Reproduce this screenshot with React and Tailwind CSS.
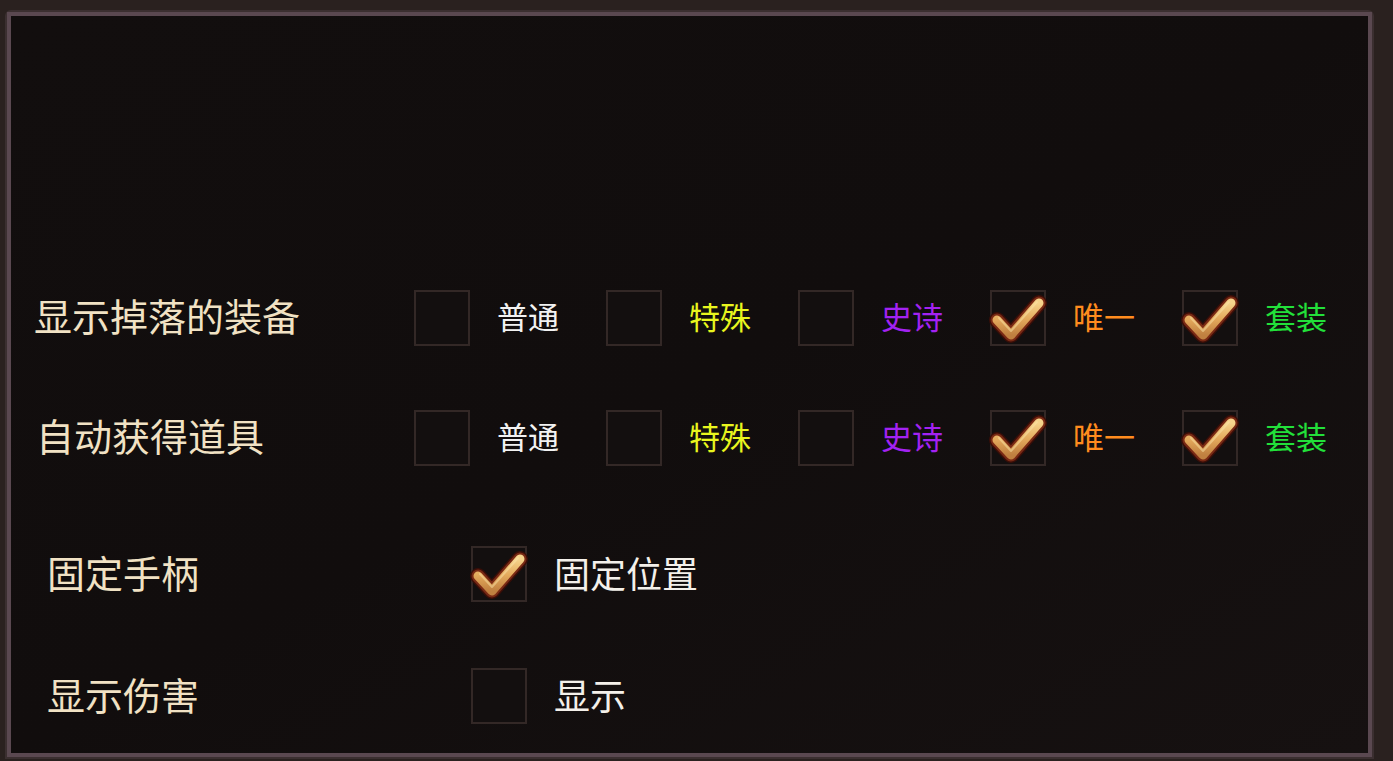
const cjk = { fontFamily: '"Noto Sans CJK SC", "Noto Sans", sans-serif' };

function CheckBox({ checked }) {
  return (
    <div className="relative w-14 h-14 shrink-0 border-2 border-[#332826] bg-[#130f0f]">
      {checked && (
        <svg viewBox="0 0 56 56" className="absolute -inset-[2px] w-14 h-14 overflow-visible">
          <defs>
            <linearGradient id="gold" x1="0" y1="0" x2="0" y2="1">
              <stop offset="0" stopColor="#f6d48c" />
              <stop offset="0.5" stopColor="#e4aa5c" />
              <stop offset="1" stopColor="#c08040" />
            </linearGradient>
          </defs>
          <path d="M7 30 L21 45 L49 13" fill="none" stroke="#3a0e08" strokeWidth="16" strokeLinecap="round" strokeLinejoin="round" />
          <path d="M7 30 L21 45 L49 13" fill="none" stroke="#7a2a14" strokeWidth="13" strokeLinecap="round" strokeLinejoin="round" />
          <path d="M7 30 L21 45 L49 13" fill="none" stroke="url(#gold)" strokeWidth="9" strokeLinecap="round" strokeLinejoin="round" />
          <path d="M9 28 L21 41 L47 12" fill="none" stroke="#fbe3a8" strokeWidth="2" strokeLinecap="round" strokeLinejoin="round" opacity="0.5" />
        </svg>
      )}
    </div>
  );
}

const rarities = [
  { name: '普通', color: 'text-[#f2f2f2]' },
  { name: '特殊', color: 'text-[#e8f51e]' },
  { name: '史诗', color: 'text-[#a322f2]' },
  { name: '唯一', color: 'text-[#ff8c1e]' },
  { name: '套装', color: 'text-[#22e03a]' },
];

function RarityRow({ label, indent, width }) {
  return (
    <div className={`flex items-center h-14 ${indent}`}>
      <div className={`${width} shrink-0 -mt-[6px] text-[38px] leading-none text-[#f1e2c4]`}>{label}</div>
      {rarities.map((r, i) => (
        <div key={r.name} className={`${i < 4 ? 'w-[192px]' : ''} shrink-0 flex items-center gap-[27px]`}>
          <CheckBox checked={i >= 3} />
          <span className={`-mt-[5px] text-[31px] leading-none ${r.color}`}>{r.name}</span>
        </div>
      ))}
    </div>
  );
}

function ToggleRow({ label, option, checked }) {
  return (
    <div className="flex items-center h-14 pl-[36px]">
      <div className="w-[424px] shrink-0 -mt-[5px] text-[38px] leading-none text-[#f1e2c4]">{label}</div>
      <CheckBox checked={checked} />
      <span className="ml-[27px] -mt-[5px] text-[36px] leading-none text-[#f4f0ea]">{option}</span>
    </div>
  );
}

export default function App() {
  return (
    <div className="h-screen w-full overflow-hidden bg-[#2a211f] pt-[10px] pl-[5px] pr-[19px] pb-[2px]" style={cjk}>
      <div className="h-full rounded-t-[6px] border-[2px] border-[#3b2f30]">
        <div className="h-full border-[4px] border-[#5a4850]">
          <div className="h-full overflow-hidden bg-gradient-to-br from-[#120e0e] via-[#110d0d] to-[#161111] pt-[274px] flex flex-col">
            <RarityRow label="显示掉落的装备" indent="pl-[23px]" width="w-[380px]" />
            <div className="h-[64px] shrink-0" />
            <RarityRow label="自动获得道具" indent="pl-[25px]" width="w-[378px]" />
            <div className="h-[80px] shrink-0" />
            <ToggleRow label="固定手柄" option="固定位置" checked />
            <div className="h-[66px] shrink-0" />
            <ToggleRow label="显示伤害" option="显示" checked={false} />
          </div>
        </div>
      </div>
    </div>
  );
}
